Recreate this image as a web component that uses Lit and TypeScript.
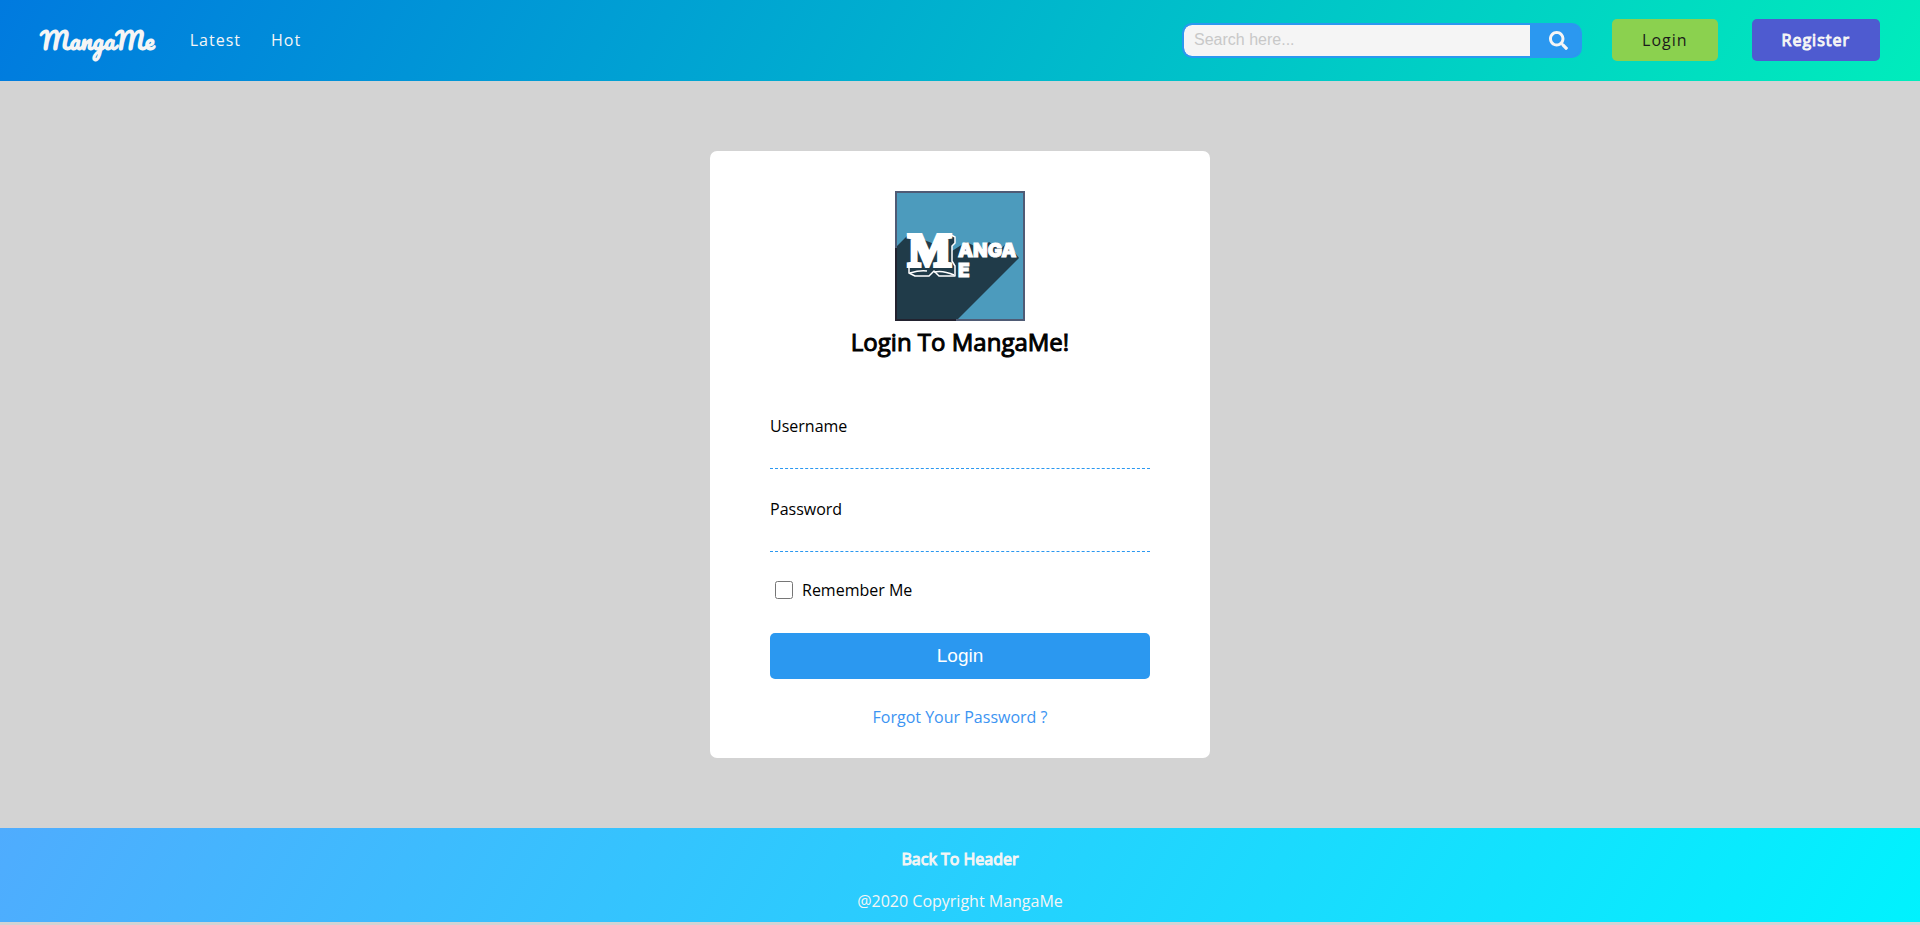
import { LitElement, html, css } from "lit";
import { customElement } from "lit/decorators.js";

@customElement("site-header")
class SiteHeader extends LitElement {
  static styles = css`
    :host {
      display: block;
      font-family: "Open Sans", sans-serif;
    }
    .bar {
      display: flex;
      align-items: center;
      justify-content: space-between;
      box-sizing: border-box;
      height: 81px;
      padding: 0 40px 1px;
      background: linear-gradient(120deg, #007adf 0%, #00ecbc 100%);
    }
    .nav,
    .actions {
      display: flex;
      align-items: center;
    }
    a {
      color: whitesmoke;
      text-decoration: none;
      letter-spacing: 1px;
    }
    .brand {
      margin-right: 35px;
      font: bold 24px/40px "Pacifico", "Liberation Serif", cursive;
      letter-spacing: normal;
    }
    .link {
      margin-right: 30px;
      font-size: 16px;
      line-height: 24px;
    }
    .search {
      display: flex;
      box-sizing: border-box;
      width: 400px;
      height: 35px;
      margin-right: 30px;
      border: 2px solid #2b98f0;
      border-radius: 10px;
      overflow: hidden;
      background: #2b98f0;
    }
    .search input {
      flex: 1;
      min-width: 0;
      padding: 0 10px 1px;
      border: 0;
      border-radius: 8px 0 0 8px;
      background: whitesmoke;
      font: 16px "Liberation Sans", sans-serif;
      outline: 0;
    }
    .search input::placeholder {
      color: #c8c8c8;
    }
    .search button {
      display: flex;
      align-items: center;
      justify-content: center;
      width: 50px;
      padding: 0 0 0 6px;
      border: 0;
      background: #2b98f0;
      color: whitesmoke;
    }
    .btn {
      padding: 10px 30px;
      border-radius: 5px;
      font-size: 16px;
      line-height: 22px;
    }
    .login {
      margin-right: 34px;
      background: #8bd14f;
      color: #1a1a1a;
      font-weight: 500;
    }
    .register {
      background: #4e5bd0;
      -webkit-text-stroke: 1px whitesmoke;
    }
  `;

  render() {
    return html`
      <header class="bar">
        <nav class="nav">
          <a class="brand" href="#">MangaMe</a>
          <a class="link" href="#">Latest</a>
          <a class="link" href="#">Hot</a>
        </nav>
        <div class="actions">
          <form class="search" role="search">
            <input type="text" placeholder="Search here..." aria-label="Search" />
            <button type="button" aria-label="Search">
              <svg width="19" height="19" viewBox="0 0 512 512" fill="currentColor">
                <path
                  d="M505 442.700L405.300 343c-4.500-4.500-10.600-7-17-7H372c27.600-35.300 44-79.700 44-128C416 93.100 322.900 0 208 0S0 93.100 0 208s93.100 208 208 208c48.300 0 92.700-16.400 128-44v16.300c0 6.400 2.500 12.500 7 17l99.700 99.700c9.400 9.400 24.600 9.400 33.900 0l28.300-28.300c9.400-9.400 9.400-24.600.1-34zM208 336c-70.700 0-128-57.200-128-128 0-70.700 57.200-128 128-128 70.700 0 128 57.200 128 128 0 70.700-57.200 128-128 128z"
                />
              </svg>
            </button>
          </form>
          <a class="btn login" href="#">Login</a>
          <a class="btn register" href="#">Register</a>
        </div>
      </header>
    `;
  }
}

@customElement("login-card")
class LoginCard extends LitElement {
  static styles = css`
    :host {
      display: block;
      width: 500px;
      max-width: 100%;
      font-family: "Open Sans", sans-serif;
    }
    .card {
      display: flex;
      flex-direction: column;
      box-sizing: border-box;
      padding: 40px 60px 30px;
      border-radius: 7px;
      background: #fff;
      font-size: 16px;
      line-height: 22px;
      color: #000;
    }
    .logo {
      align-self: center;
      display: block;
    }
    h1 {
      margin: 4px 0 56px;
      text-align: center;
      font-size: 24px;
      line-height: 34px;
      font-weight: 400;
      -webkit-text-stroke: 1px #000;
    }
    .field {
      display: flex;
      flex-direction: column;
      margin-bottom: 29px;
    }
    .field input {
      height: 32px;
      box-sizing: border-box;
      padding: 0;
      border: 0;
      border-bottom: 1px dashed #2b98f0;
      background: none;
      font: inherit;
      outline: 0;
    }
    .remember {
      display: flex;
      align-items: center;
      gap: 9px;
      margin-bottom: 34px;
      line-height: 18px;
    }
    .remember input {
      width: 18px;
      height: 18px;
      margin: 0 0 0 5px;
    }
    button {
      height: 46px;
      border: 0;
      border-radius: 5px;
      background: #2b98f0;
      color: #fff;
      font: 19px "Liberation Sans", sans-serif;
    }
    .forgot {
      align-self: center;
      margin-top: 27px;
      color: #3c94f2;
      text-decoration: none;
    }
    .m {
      font: bold 46px "Liberation Serif", serif;
    }
    .rest {
      font: 900 19px "Inter", sans-serif;
    }
  `;

  render() {
    return html`
      <form class="card">
        <svg class="logo" width="130" height="130" viewBox="0 0 130 130" role="img" aria-label="MangaMe">
          <rect width="130" height="130" fill="#4c9bbd" />
          <path d="M0 57L14 43L57 60L71 51L86 58L94 51L106 58L112 51L124 67L61 130H0Z" fill="#203b49" />
          <path
            d="M14 75V82L20 85H34L39 80L44 85H60V75L57 70V55L60 52V46L54 43"
            fill="#203b49"
            stroke="#fff"
            stroke-width="1.500"
            stroke-linejoin="round"
          />
          <path d="M15 82Q25 79 32 80M39 81Q48 79 59 84" fill="none" stroke="#fff" stroke-width="1.500" />
          <text class="m" x="13" y="75" fill="#fff" stroke="#fff" stroke-width="4">M</text>
          <text class="rest" x="63" y="66" fill="#fff" stroke="#fff">ANGA</text>
          <text class="rest" x="63" y="86" fill="#fff" stroke="#fff">E</text>
          <rect x="1" y="1" width="128" height="128" fill="none" stroke="#4f5b75" stroke-width="2" />
          <path d="M1 57V129H61" fill="none" stroke="#22222f" stroke-width="2" />
        </svg>
        <h1>Login To MangaMe!</h1>
        <div class="field">
          <label for="username">Username</label>
          <input id="username" type="text" />
        </div>
        <div class="field">
          <label for="password">Password</label>
          <input id="password" type="password" />
        </div>
        <div class="remember">
          <input id="remember" type="checkbox" />
          <label for="remember">Remember Me</label>
        </div>
        <button type="button">Login</button>
        <a class="forgot" href="#">Forgot Your Password ?</a>
      </form>
    `;
  }
}

@customElement("site-footer")
class SiteFooter extends LitElement {
  static styles = css`
    :host {
      display: block;
      font-family: "Open Sans", sans-serif;
    }
    .footer {
      display: flex;
      flex-direction: column;
      align-items: center;
      gap: 20px;
      padding: 20px 0 10px;
      background: linear-gradient(120deg, #4facfe 0%, #00f2fe 100%);
      color: whitesmoke;
      font-size: 16px;
      line-height: 22px;
    }
    a {
      color: inherit;
      text-decoration: none;
      -webkit-text-stroke: 1px whitesmoke;
    }
  `;

  render() {
    return html`
      <footer class="footer">
        <a href="#">Back To Header</a>
        <span>@2020 Copyright MangaMe</span>
      </footer>
    `;
  }
}

@customElement("app-root")
class AppRoot extends LitElement {
  static styles = css`
    :host {
      display: block;
      min-height: 100vh;
      background: lightgray;
    }
    .main {
      display: flex;
      justify-content: center;
      padding: 70px 0;
    }
  `;

  render() {
    return html`
      <site-header></site-header>
      <main class="main"><login-card></login-card></main>
      <site-footer></site-footer>
    `;
  }
}
